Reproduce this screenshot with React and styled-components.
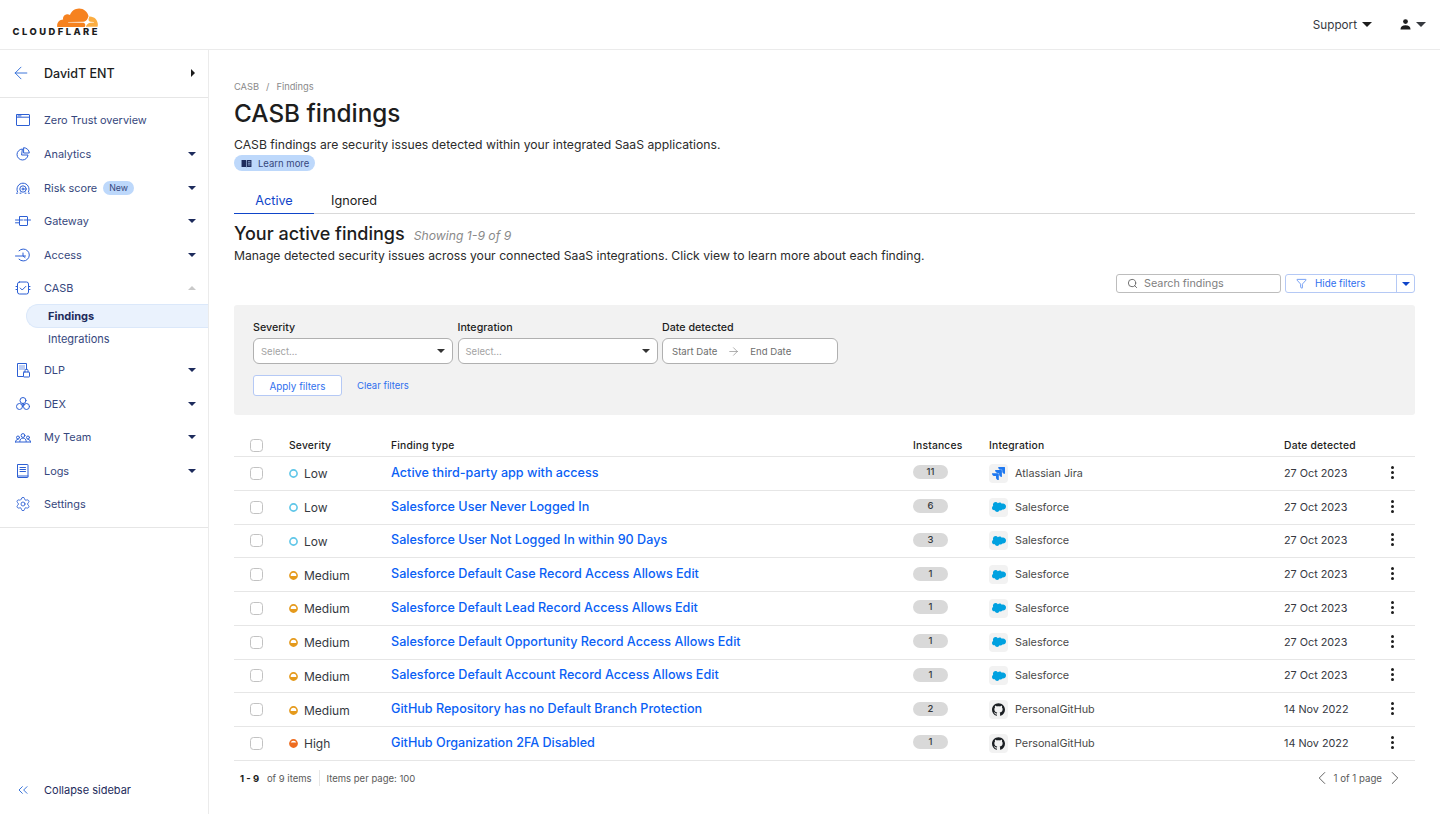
import React from 'react';
import styled, { createGlobalStyle } from 'styled-components';
import { ArrowLeft, ArrowRight, ChevronLeft, ChevronRight, ChevronsLeft, Filter, Search, Settings } from 'lucide-react';
import { SiGithub, SiJira, SiSalesforce } from 'react-icons/si';

const GlobalStyle = createGlobalStyle`
    * { box-sizing: border-box; }
    body {
        margin: 0;
        background: #fff;
        color: #1d1d1d;
        font-family: Inter, "Liberation Sans", sans-serif;
    }
`;

const Page = styled.div`
    display: flex;
    flex-direction: column;
    height: 814px;
    overflow: hidden;
`;

const TopBar = styled.header`
    display: flex;
    align-items: center;
    justify-content: space-between;
    height: 50px;
    padding: 0 14px 0 13px;
    border-bottom: 1px solid #ebebeb;
    flex-shrink: 0;
`;

const Logo = styled.div`
    display: flex;
    flex-direction: column;
    align-items: flex-end;
    width: 85px;
    margin-top: -5px;
`;

const LogoText = styled.span`
    font-size: 9.4px;
    font-weight: 800;
    letter-spacing: 2.47px;
    line-height: 10px;
    color: #1d1d1d;
    white-space: nowrap;
    margin-right: -2px;
`;

const TopActions = styled.div`
    display: flex;
    align-items: center;
    gap: 28px;
    font-size: 11.7px;
    color: #36393f;
`;

const TopAction = styled.div`
    display: flex;
    align-items: center;
    gap: 5px;
`;

const Caret = styled.span`
    display: inline-block;
    width: 0;
    height: 0;
    border-left: ${p => p.$size || 4}px solid transparent;
    border-right: ${p => p.$size || 4}px solid transparent;
    border-${p => (p.$up ? 'bottom' : 'top')}: ${p => p.$size || 4}px solid ${p => p.$color || '#1d2b5c'};
`;

const Body = styled.div`
    display: flex;
    flex: 1;
    min-height: 0;
`;

const Sidebar = styled.nav`
    display: flex;
    flex-direction: column;
    width: 209px;
    flex-shrink: 0;
    border-right: 1px solid #ebebeb;
    color: #36477d;
`;

const AccountRow = styled.div`
    display: flex;
    align-items: center;
    height: 48px;
    padding: 0 13px 1px 11px;
    border-bottom: 1px solid #e6e6e6;
    font-size: 12.5px;
    font-weight: 500;
    color: #1d1d1d;
    svg { color: #2c6ad6; margin-right: 13px; }
`;

const AccountName = styled.span`
    flex: 1;
`;

const SideCaret = styled.span`
    width: 0;
    height: 0;
    border-top: 4px solid transparent;
    border-bottom: 4px solid transparent;
    border-left: 4px solid #1d1d1d;
`;

const NavList = styled.div`
    display: flex;
    flex-direction: column;
    padding: 5.7px 0 5.5px;
    border-bottom: 1px solid #e6e6e6;
`;

const NavItem = styled.div`
    display: flex;
    align-items: center;
    height: 33.6px;
    padding: 0 12px 0 15px;
    font-size: 10.9px;
`;

const NavIcon = styled.span`
    display: flex;
    align-items: center;
    justify-content: center;
    width: 16px;
    height: 16px;
    margin-right: 13px;
    color: #2c5fd4;
`;

const NavLabel = styled.span`
    flex: 1;
    display: flex;
    align-items: center;
    gap: 6px;
`;

const NewBadge = styled.span`
    padding: 0 6px;
    height: 14px;
    line-height: 14px;
    border-radius: 7px;
    background: #bdd8fb;
    color: #36477d;
    font-size: 8.8px;
`;

const SubItem = styled.div`
    display: flex;
    align-items: center;
    height: ${p => (p.$active ? '24px' : '22px')};
    margin-left: 26px;
    padding-left: ${p => (p.$active ? '21px' : '22px')};
    font-size: 11px;
    font-weight: ${p => (p.$active ? 700 : 400)};
    color: ${p => (p.$active ? '#1d2b5c' : '#36477d')};
    background: ${p => (p.$active ? '#eaf2fd' : 'transparent')};
    border: ${p => (p.$active ? '1px solid #dbe8fa' : 'none')};
    border-right: none;
    border-radius: 12px 0 0 12px;
`;

const SubList = styled.div`
    display: flex;
    flex-direction: column;
    margin: -1px 0 3px;
`;

const CollapseRow = styled.div`
    display: flex;
    align-items: center;
    margin-top: auto;
    height: 46px;
    padding: 0 15px 2px;
    font-size: 11px;
    color: #1d2b5c;
    svg { color: #2c6ad6; margin-right: 13px; }
`;

const Main = styled.main`
    flex: 1;
    min-width: 0;
    padding: 30px 25px 0 25px;
`;

const Breadcrumb = styled.div`
    display: flex;
    gap: 7px;
    height: 13px;
    line-height: 13px;
    font-size: 9.3px;
    color: #8a8a8a;
`;

const Title = styled.h1`
    margin: 2px 0 0;
    font-size: 24.3px;
    line-height: 37px;
    font-weight: 500;
    color: #1d1d1d;
`;

const Lead = styled.p`
    margin: 4px 0 0;
    font-size: 12.2px;
    line-height: 18px;
    color: #2b2b2b;
`;

const LearnMore = styled.a`
    display: inline-flex;
    align-items: center;
    gap: 6px;
    height: 16px;
    padding: 0 6px 0 7px;
    margin-top: 1px;
    border-radius: 8px;
    background: #bdd8fb;
    font-size: 9.5px;
    color: #36477d;
    vertical-align: top;
`;

const Tabs = styled.div`
    display: flex;
    margin-top: 14px;
    border-bottom: 1px solid #d9d9d9;
`;

const Tab = styled.div`
    height: 26px;
    width: ${p => p.$width}px;
    line-height: 26px;
    margin-bottom: -1px;
    text-align: center;
    font-size: 12.7px;
    color: ${p => (p.$active ? '#0f45c9' : '#1d1d1d')};
    border-bottom: ${p => (p.$active ? '1px solid #0f45c9' : 'none')};
`;

const SectionHead = styled.div`
    display: flex;
    align-items: baseline;
    gap: 9px;
    margin-top: 8px;
`;

const SectionTitle = styled.h2`
    margin: 0;
    font-size: 18px;
    line-height: 24px;
    font-weight: 500;
    color: #1d1d1d;
`;

const Showing = styled.span`
    font-size: 12.2px;
    font-style: italic;
    color: #8a8a8a;
`;

const SectionText = styled.p`
    margin: 1px 0 0;
    font-size: 12.2px;
    line-height: 18px;
    color: #2b2b2b;
`;

const Toolbar = styled.div`
    display: flex;
    justify-content: flex-end;
    gap: 4px;
    margin-top: 9px;
`;

const SearchBox = styled.div`
    display: flex;
    align-items: center;
    gap: 6px;
    width: 165px;
    height: 19px;
    padding: 0 10px;
    border: 1px solid #bdbdbd;
    border-radius: 3px;
    font-size: 10.8px;
    color: #808080;
    svg { color: #666; }
`;

const SplitButton = styled.div`
    display: flex;
    width: 130px;
    height: 19px;
    border: 1px solid #b5c9f5;
    border-radius: 3px;
    color: #2f6fee;
    font-size: 9.8px;
`;

const SplitMain = styled.div`
    display: flex;
    align-items: center;
    flex: 1;
    gap: 8px;
    padding-left: 10px;
    border-right: 1px solid #b5c9f5;
`;

const SplitCaret = styled.div`
    display: flex;
    align-items: center;
    justify-content: center;
    width: 17px;
`;

const FilterPanel = styled.section`
    margin-top: 12px;
    margin-left: -0.5px;
    height: 110px;
    padding: 16px 20px 0 19.5px;
    background: #f2f2f2;
    border-radius: 3px;
`;

const FilterRow = styled.div`
    display: flex;
    gap: 4.5px;
`;

const FilterField = styled.div`
    display: flex;
    flex-direction: column;
    gap: 3px;
    width: ${p => p.$width}px;
`;

const FilterLabel = styled.label`
    font-size: 10.7px;
    line-height: 14px;
    font-weight: 500;
    color: #1d1d1d;
`;

const SelectBox = styled.div`
    display: flex;
    align-items: center;
    justify-content: space-between;
    height: 26px;
    padding: 0 7px;
    background: #fff;
    border: 1px solid #b0b0b0;
    border-radius: 6px;
    font-size: 9.5px;
    color: #a3a3a3;
`;

const DateBox = styled(SelectBox)`
    justify-content: flex-start;
    gap: 10px;
    padding: 0 9px;
    font-size: 9.6px;
    color: #6e6e6e;
    svg { color: #6e6e6e; }
`;

const FilterActions = styled.div`
    display: flex;
    align-items: center;
    gap: 15px;
    margin-top: 11px;
`;

const ApplyButton = styled.button`
    width: 89px;
    height: 21px;
    padding: 0;
    background: #fff;
    border: 1px solid #b5c9f5;
    border-radius: 3px;
    font: inherit;
    font-size: 9.9px;
    color: #2f6fee;
`;

const ClearLink = styled.a`
    font-size: 9.5px;
    color: #2f6fee;
`;

const Table = styled.div`
    margin-top: 19px;
`;

const columns = '55px 102px 522px 76px 295px 1fr';

const HeadRow = styled.div`
    display: grid;
    grid-template-columns: ${columns};
    align-items: center;
    height: 23px;
    border-bottom: 1px solid #e6e6e6;
    font-size: 10.3px;
    font-weight: 500;
    color: #1d1d1d;
    letter-spacing: 0.2px;
`;

const Row = styled.div`
    display: grid;
    grid-template-columns: ${columns};
    align-items: center;
    height: 33.75px;
    border-bottom: 1px solid #e6e6e6;
`;

const CheckCell = styled.div`
    padding-left: 16px;
`;

const CheckBox = styled.span`
    display: block;
    width: 13px;
    height: 13px;
    background: #fff;
    border: 1px solid #c2c2c2;
    border-radius: 3.5px;
`;

const SeverityCell = styled.div`
    display: flex;
    align-items: center;
    gap: 6px;
    padding-top: 1px;
    font-size: 12px;
    color: #36393f;
`;

const FindingLink = styled.a`
    font-size: 12.6px;
    font-weight: 500;
    color: #0a5ff5;
    margin-top: -2px;
`;

const CountPill = styled.span`
    display: block;
    width: 35px;
    height: 14px;
    line-height: 14px;
    margin-top: -2px;
    border-radius: 7px;
    background: #d9d9d9;
    text-align: center;
    font-size: 9.5px;
    font-weight: 500;
    color: #36393f;
`;

const IntegrationCell = styled.div`
    display: flex;
    align-items: center;
    gap: 7px;
    font-size: 10.8px;
    color: #4a4a4a;
`;

const IntegrationIcon = styled.span`
    display: flex;
    align-items: center;
    justify-content: center;
    width: 19px;
    height: 19px;
    border-radius: 4px;
    background: #f2f2f2;
    color: ${p => p.$color};
`;

const DateCell = styled.div`
    display: flex;
    align-items: center;
    justify-content: space-between;
    padding-right: 21px;
    font-size: 10.8px;
    color: #36393f;
`;

const Kebab = styled.span`
    display: flex;
    flex-direction: column;
    gap: 2px;
    margin-top: -2px;
    i {
        display: block;
        width: 3px;
        height: 3px;
        border-radius: 50%;
        background: #1d1d1d;
    }
`;

const Footer = styled.footer`
    display: flex;
    align-items: center;
    justify-content: space-between;
    height: 35px;
    padding: 0 9px 0 6px;
    font-size: 9.5px;
    color: #5a5a5a;
`;

const FooterLeft = styled.div`
    display: flex;
    align-items: center;
    gap: 5px;
    b { color: #1d1d1d; font-weight: 700; }
`;

const FooterDivider = styled.span`
    width: 1px;
    height: 16px;
    margin: 0 2px;
    background: #e6e6e6;
`;

const Pager = styled.div`
    display: flex;
    align-items: center;
    font-size: 9.7px;
    svg { color: #555; }
    svg:last-child { margin-left: 2px; }
`;

function CloudLogo() {
    return (
        <svg width="41" height="19" viewBox="0 6.3 24 11.2">
            <path fill="#f6821f" d="M16.5088 16.8447c.1475-.5068.0908-.9707-.1553-1.3154-.2246-.3164-.6045-.499-1.0615-.5205l-8.6592-.1123a.1559.1559 0 0 1-.1333-.0713c-.0283-.042-.0351-.0986-.021-.1553.0278-.084.1123-.1484.2036-.1562l8.7359-.1123c1.0351-.0489 2.1601-.8868 2.5537-1.9136l.499-1.3013c.0215-.0561.0293-.1128.0147-.168-.5625-2.5463-2.835-4.4453-5.5499-4.4453-2.5039 0-4.6284 1.6177-5.3876 3.8614-.4927-.3658-1.1187-.5625-1.794-.499-1.2026.119-2.1665 1.083-2.2861 2.2856-.0283.31-.0069.6128.0635.894C1.5683 13.171 0 14.7754 0 16.752c0 .1748.0142.3515.0352.5273.0141.083.0844.1475.1689.1475h15.9814c.0909 0 .1758-.0645.2032-.1553l.12-.4268z" />
            <path fill="#fbad41" d="M19.2656 11.2813c-.0771 0-.1611 0-.2383.0112-.0566 0-.1054.0415-.127.0976l-.3378 1.1744c-.1475.5068-.0918.9707.1543 1.3164.2256.3164.6055.498 1.0625.5195l1.8437.1133c.0557 0 .1055.0263.1329.0703.0283.043.0351.1074.0214.1562-.0283.084-.1132.1485-.204.1553l-1.921.1123c-1.041.0488-2.1582.8867-2.5527 1.914l-.1406.3585c-.0283.0713.0215.1416.0986.1416h6.5977c.0771 0 .1474-.0489.169-.126.1122-.4082.1757-.837.1757-1.2803 0-2.6025-2.125-4.727-4.7344-4.727z" />
        </svg>
    );
}

function UserIcon() {
    return (
        <svg width="11" height="11" viewBox="0 0 11 11" fill="#1d1d1d">
            <circle cx="5.5" cy="2.6" r="2.4" />
            <path d="M0.5 10.5c0-3 2-4.2 5-4.2s5 1.2 5 4.2z" />
        </svg>
    );
}

function BookIcon() {
    return (
        <svg width="11" height="9" viewBox="0 0 12 10" fill="#1d2b5c">
            <path d="M0.5 1h4.6c.4 0 .6.2.6.6V9.5c-.2-.3-.5-.5-1-.5H.5z" />
            <path d="M11.5 1H6.9c-.4 0-.6.2-.6.6V9.5c.2-.3.5-.5 1-.5h4.2z" />
            <path d="M7.6 3h2.8M7.6 4.8h2.8M7.6 6.6h2.8" stroke="#bdd8fb" strokeWidth="0.7" />
        </svg>
    );
}

const Stroke = ({ children, size = 16, view = 16 }) => (
    <svg width={size} height={size} viewBox={`0 0 ${view} ${view}`} fill="none" stroke="currentColor" strokeWidth="1" strokeLinecap="round" strokeLinejoin="round">
        {children}
    </svg>
);

const icons = {
    overview: <Stroke><rect x="1.5" y="2.5" width="13" height="11" rx="0.5" /><path d="M1.5 5.2h13" /><path d="M3 3.9h3" /></Stroke>,
    analytics: <Stroke><path d="M7 3a5.5 5.5 0 1 0 6 6H7z" /><path d="M9 1.7A5.5 5.5 0 0 1 14.3 7H9z" /></Stroke>,
    risk: <Stroke><path d="M2.6 12A6 6 0 0 1 8 3.2 6 6 0 0 1 13.4 12" /><circle cx="8" cy="9" r="3.2" /><circle cx="8" cy="9" r="1" /><path d="M1.5 13.2h1M13.5 13.2h1M5 13.2h1M10 13.2h1" /></Stroke>,
    gateway: <Stroke><rect x="4.5" y="3.5" width="8" height="9" rx="0.5" /><path d="M0.5 7h7M0.5 9.8h4M9 7h6.5" /></Stroke>,
    access: <Stroke><path d="M4 3.8A6 6 0 1 1 4 12.2" /><path d="M0.5 9h10" /><path d="M8 6v3l2 1.5" /></Stroke>,
    casb: <Stroke><rect x="2.5" y="2" width="11" height="12" rx="2" /><path d="M5.2 8l2 2 3.6-3.6" /><path d="M1 6.5h1.5M1 9.5h1.5M13.5 6.5H15M13.5 9.5H15" /></Stroke>,
    dlp: <Stroke><path d="M8 14.5H2.5v-13h9v6" /><rect x="4" y="3" width="6" height="5" fill="#bccdf3" stroke="none" /><rect x="8.5" y="10" width="6" height="5" rx="0.5" /><path d="M10 10V8.6a1.5 1.5 0 0 1 3 0V10" /></Stroke>,
    dex: <Stroke><circle cx="8" cy="4.5" r="3" /><circle cx="4.5" cy="10.5" r="3" /><circle cx="11.5" cy="10.5" r="3" /><circle cx="8" cy="8.5" r="1" /></Stroke>,
    team: <Stroke size={17}><circle cx="8" cy="6" r="1.9" /><path d="M4.8 12c0-2.2 1.3-3.4 3.2-3.4s3.2 1.2 3.2 3.4" /><circle cx="3" cy="8" r="1.5" /><path d="M0.5 12.5c0-1.6 1-2.6 2.5-2.6" /><circle cx="13" cy="8" r="1.5" /><path d="M15.5 12.5c0-1.6-1-2.6-2.5-2.6M0.5 12.5h15" /></Stroke>,
    logs: <Stroke><rect x="2.5" y="1.5" width="10.5" height="13" rx="0.5" /><path d="M2.5 13h10.5" /><path d="M5 4.5h5.5M5 6.5h5.5M5 8.5h5.5" /></Stroke>,
    settings: <Settings size={16} strokeWidth={1.3} />,
};

const topNav = [
    { icon: 'overview', label: 'Zero Trust overview' },
    { icon: 'analytics', label: 'Analytics', caret: true },
    { icon: 'risk', label: 'Risk score', caret: true, badge: 'New' },
    { icon: 'gateway', label: 'Gateway', caret: true },
    { icon: 'access', label: 'Access', caret: true },
];

const bottomNav = [
    { icon: 'dlp', label: 'DLP', caret: true },
    { icon: 'dex', label: 'DEX', caret: true },
    { icon: 'team', label: 'My Team', caret: true },
    { icon: 'logs', label: 'Logs', caret: true },
    { icon: 'settings', label: 'Settings' },
];

function SideLink({ item }) {
    return (
        <NavItem>
            <NavIcon>{icons[item.icon]}</NavIcon>
            <NavLabel>
                {item.label}
                {item.badge && <NewBadge>{item.badge}</NewBadge>}
            </NavLabel>
            {item.caret && <Caret />}
        </NavItem>
    );
}

const severityStyle = {
    Low: { color: '#5fc6e8', level: 0 },
    Medium: { color: '#e59a1c', level: 4 },
    High: { color: '#ee6c1f', level: 5.6 },
};

function SeverityIcon({ name }) {
    const { color, level } = severityStyle[name];
    return (
        <svg width="9" height="9" viewBox="0 0 9 9">
            <defs>
                <clipPath id={`sev-${name}`}>
                    <rect x="0" y={9 - level} width="9" height={level} />
                </clipPath>
            </defs>
            <circle cx="4.5" cy="4.5" r="3.6" fill="none" stroke={color} strokeWidth="1.6" />
            {level > 0 && <circle cx="4.5" cy="4.5" r="3.6" fill={color} clipPath={`url(#sev-${name})`} />}
        </svg>
    );
}

const integrationIcons = {
    jira: { name: 'Atlassian Jira', color: '#1e78f0', icon: <SiJira size={13} /> },
    salesforce: { name: 'Salesforce', color: '#00a1e0', icon: <SiSalesforce size={14} /> },
    github: { name: 'PersonalGitHub', color: '#1b1f23', icon: <SiGithub size={13} /> },
};

const findings = [
    { severity: 'Low', title: 'Active third-party app with access', count: 11, integration: 'jira', date: '27 Oct 2023' },
    { severity: 'Low', title: 'Salesforce User Never Logged In', count: 6, integration: 'salesforce', date: '27 Oct 2023' },
    { severity: 'Low', title: 'Salesforce User Not Logged In within 90 Days', count: 3, integration: 'salesforce', date: '27 Oct 2023' },
    { severity: 'Medium', title: 'Salesforce Default Case Record Access Allows Edit', count: 1, integration: 'salesforce', date: '27 Oct 2023' },
    { severity: 'Medium', title: 'Salesforce Default Lead Record Access Allows Edit', count: 1, integration: 'salesforce', date: '27 Oct 2023' },
    { severity: 'Medium', title: 'Salesforce Default Opportunity Record Access Allows Edit', count: 1, integration: 'salesforce', date: '27 Oct 2023' },
    { severity: 'Medium', title: 'Salesforce Default Account Record Access Allows Edit', count: 1, integration: 'salesforce', date: '27 Oct 2023' },
    { severity: 'Medium', title: 'GitHub Repository has no Default Branch Protection', count: 2, integration: 'github', date: '14 Nov 2022' },
    { severity: 'High', title: 'GitHub Organization 2FA Disabled', count: 1, integration: 'github', date: '14 Nov 2022' },
];

function App() {
    return (
        <Page>
            <GlobalStyle />
            <TopBar>
                <Logo>
                    <CloudLogo />
                    <LogoText>CLOUDFLARE</LogoText>
                </Logo>
                <TopActions>
                    <TopAction>Support <Caret $size={5} $color="#1d1d1d" /></TopAction>
                    <TopAction><UserIcon /><Caret $size={5} $color="#36393f" /></TopAction>
                </TopActions>
            </TopBar>
            <Body>
                <Sidebar>
                    <AccountRow>
                        <ArrowLeft size={20} strokeWidth={1.1} />
                        <AccountName>DavidT ENT</AccountName>
                        <SideCaret />
                    </AccountRow>
                    <NavList>
                        {topNav.map(item => <SideLink key={item.label} item={item} />)}
                        <NavItem>
                            <NavIcon>{icons.casb}</NavIcon>
                            <NavLabel>CASB</NavLabel>
                            <Caret $up $color="#c9c9c9" />
                        </NavItem>
                        <SubList>
                            <SubItem $active>Findings</SubItem>
                            <SubItem>Integrations</SubItem>
                        </SubList>
                        {bottomNav.map(item => <SideLink key={item.label} item={item} />)}
                    </NavList>
                    <CollapseRow>
                        <ChevronsLeft size={16} strokeWidth={1.4} />
                        Collapse sidebar
                    </CollapseRow>
                </Sidebar>
                <Main>
                    <Breadcrumb><span>CASB</span><span>/</span><span>Findings</span></Breadcrumb>
                    <Title>CASB findings</Title>
                    <Lead>CASB findings are security issues detected within your integrated SaaS applications.</Lead>
                    <LearnMore>
                        <BookIcon />
                        Learn more
                    </LearnMore>
                    <Tabs>
                        <Tab $active $width={80}>Active</Tab>
                        <Tab $width={80}>Ignored</Tab>
                    </Tabs>
                    <SectionHead>
                        <SectionTitle>Your active findings</SectionTitle>
                        <Showing>Showing 1-9 of 9</Showing>
                    </SectionHead>
                    <SectionText>Manage detected security issues across your connected SaaS integrations. Click view to learn more about each finding.</SectionText>
                    <Toolbar>
                        <SearchBox><Search size={11} />Search findings</SearchBox>
                        <SplitButton>
                            <SplitMain><Filter size={11} strokeWidth={1.4} />Hide filters</SplitMain>
                            <SplitCaret><Caret $size={4.5} $color="#0f45c9" /></SplitCaret>
                        </SplitButton>
                    </Toolbar>
                    <FilterPanel>
                        <FilterRow>
                            <FilterField $width={200}>
                                <FilterLabel>Severity</FilterLabel>
                                <SelectBox>Select...<Caret $size={4.5} $color="#333" /></SelectBox>
                            </FilterField>
                            <FilterField $width={200}>
                                <FilterLabel>Integration</FilterLabel>
                                <SelectBox>Select...<Caret $size={4.5} $color="#333" /></SelectBox>
                            </FilterField>
                            <FilterField $width={175.5}>
                                <FilterLabel>Date detected</FilterLabel>
                                <DateBox>Start Date<ArrowRight size={13} strokeWidth={1} />End Date</DateBox>
                            </FilterField>
                        </FilterRow>
                        <FilterActions>
                            <ApplyButton>Apply filters</ApplyButton>
                            <ClearLink>Clear filters</ClearLink>
                        </FilterActions>
                    </FilterPanel>
                    <Table>
                        <HeadRow>
                            <CheckCell><CheckBox /></CheckCell>
                            <span>Severity</span>
                            <span>Finding type</span>
                            <span>Instances</span>
                            <span>Integration</span>
                            <span>Date detected</span>
                        </HeadRow>
                        {findings.map(f => {
                            const integration = integrationIcons[f.integration];
                            return (
                                <Row key={f.title}>
                                    <CheckCell><CheckBox /></CheckCell>
                                    <SeverityCell><SeverityIcon name={f.severity} />{f.severity}</SeverityCell>
                                    <FindingLink>{f.title}</FindingLink>
                                    <CountPill>{f.count}</CountPill>
                                    <IntegrationCell>
                                        <IntegrationIcon $color={integration.color}>{integration.icon}</IntegrationIcon>
                                        {integration.name}
                                    </IntegrationCell>
                                    <DateCell>
                                        {f.date}
                                        <Kebab><i /><i /><i /></Kebab>
                                    </DateCell>
                                </Row>
                            );
                        })}
                    </Table>
                    <Footer>
                        <FooterLeft>
                            <b>1 - 9</b>&nbsp;of 9 items
                            <FooterDivider />
                            Items per page: 100
                        </FooterLeft>
                        <Pager>
                            <ChevronLeft size={22} strokeWidth={1} />
                            1 of 1 page
                            <ChevronRight size={22} strokeWidth={1} />
                        </Pager>
                    </Footer>
                </Main>
            </Body>
        </Page>
    );
}

export default App;
